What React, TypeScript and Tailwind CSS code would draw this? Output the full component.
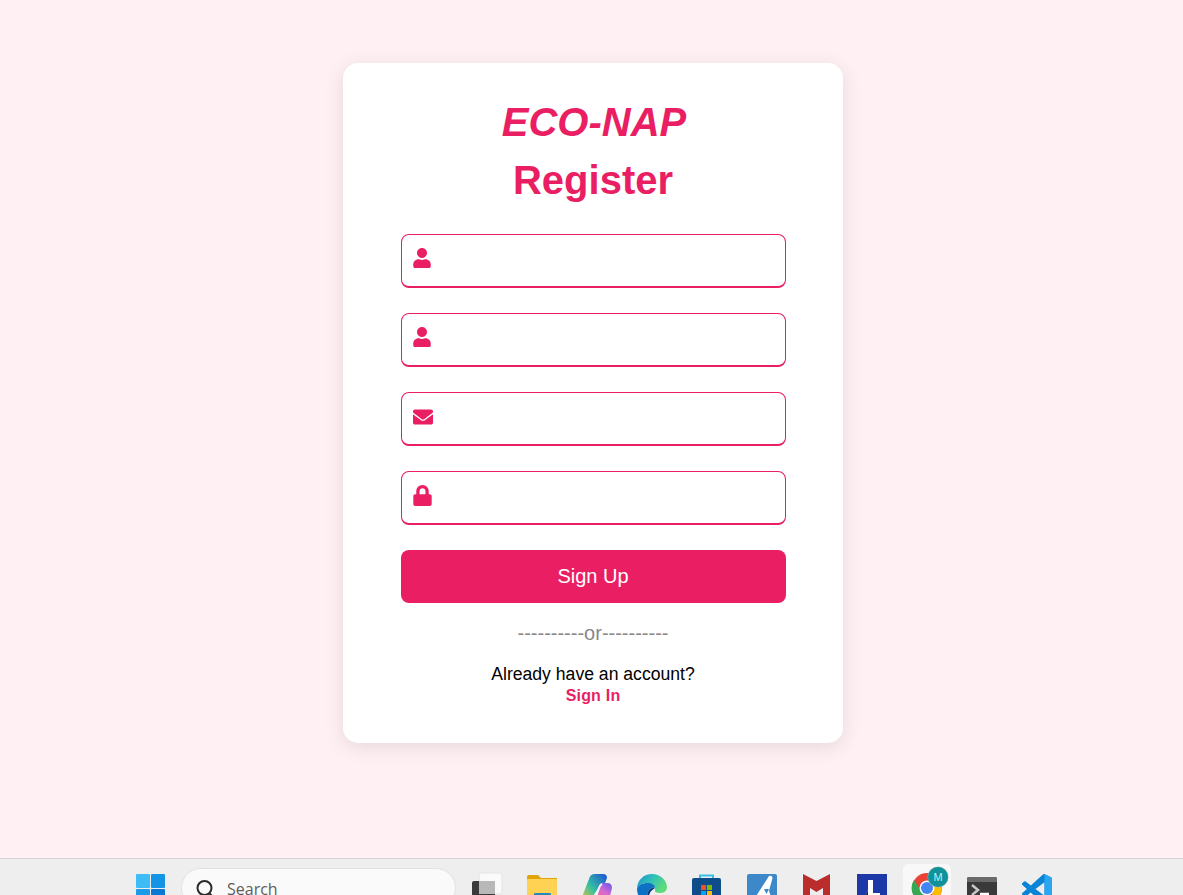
import { FaEnvelope, FaLock, FaUser } from "react-icons/fa";
import type { ReactNode } from "react";

const font = "font-['Liberation_Sans',Arial,sans-serif]";

function Field({ icon }: { icon: ReactNode }) {
  return (
    <div className="flex h-[54px] w-[385px] items-start rounded-[8px] border border-b-2 border-[#e91e63] bg-white pl-[10px] pt-[13px] text-[#e91e63]">
      {icon}
    </div>
  );
}

function Icon({ children }: { children: ReactNode }) {
  return (
    <svg width="30" height="30" viewBox="0 0 30 30" className="overflow-visible">
      {children}
    </svg>
  );
}

function TaskItem({ children, active }: { children: ReactNode; active?: boolean }) {
  return (
    <div className="flex w-[55px] shrink-0 justify-center pt-[5px]">
      <div
        className={
          active
            ? "flex h-[60px] w-[48px] justify-center rounded-[5px] bg-[#f8f8f8] pt-[10px]"
            : "flex h-[60px] w-[48px] justify-center pt-[10px]"
        }
      >
        {children}
      </div>
    </div>
  );
}

export default function App() {
  return (
    <div className={`flex h-[895px] flex-col overflow-hidden bg-[#fff0f3] ${font}`}>
      <main className="flex-1 pl-[343px] pt-[63px]">
        <div className="flex h-[680px] w-[500px] flex-col items-center rounded-[15px] bg-white pt-[36px] shadow-[0_4px_20px_rgba(0,0,0,0.1)]">
          <h1 className="ml-[2px] text-[40px] font-bold italic leading-[46px] text-[#e91e63]">ECO-NAP</h1>
          <h2 className="mt-[12px] text-[40px] font-bold leading-[46px] text-[#e91e63]">Register</h2>

          <form className="mt-[31px] flex flex-col gap-[25px]">
            <Field icon={<FaUser size={20} />} />
            <Field icon={<FaUser size={20} />} />
            <Field icon={<FaEnvelope size={20} className="ml-[1px] mt-[1px]" />} />
            <Field icon={<FaLock size={21} />} />
            <button
              type="button"
              className="h-[53px] w-[385px] rounded-[8px] bg-[#e91e63] pb-[2px] text-[20px] text-white"
            >
              Sign Up
            </button>
          </form>

          <p className="mt-[19px] text-[20px] leading-[23px] text-[#888888]">----------or----------</p>
          <p className="mt-[19px] text-[17.6px] leading-[21px] text-black">Already have an account?</p>
          <a className="mt-[2px] text-[16px] font-bold leading-[18px] tracking-[0.2px] text-[#e91e63]">Sign In</a>
        </div>
      </main>

      <footer className="flex h-[37px] shrink-0 overflow-hidden border-t border-[#d9d2d3] bg-[#eeeeee] pl-[135px]">
        <div className="shrink-0 pt-[15px]">
          <Icon>
            <rect x="1" y="0" width="14" height="14" rx="1" fill="#3dbcf5" />
            <rect x="16" y="0" width="14" height="14" rx="1" fill="#1494e4" />
            <rect x="1" y="15" width="14" height="14" rx="1" fill="#1c9be8" />
            <rect x="16" y="15" width="14" height="14" rx="1" fill="#0a78d4" />
          </Icon>
        </div>

        <div className="ml-[16px] mt-[9px] flex h-[40px] w-[275px] shrink-0 items-start rounded-full border border-[#e2e2e2] bg-[#fafafa] pl-[13px] pt-[10px]">
          <svg width="20" height="20" viewBox="0 0 20 20" fill="none" stroke="#2b2b2b" strokeWidth="2">
            <circle cx="9.5" cy="9" r="7" />
            <path d="M14.5 14.5 18 18" />
          </svg>
          <span className="ml-[12px] font-['Open_Sans',sans-serif] text-[16px] leading-[20px] text-[#5d5d5d]">Search</span>
        </div>

        <div className="ml-[3.5px] flex">
          <TaskItem>
            <Icon>
              <rect x="7" y="-1" width="23" height="21" rx="2" fill="#fafafa" stroke="#e4e4e4" />
              <rect x="0" y="7" width="23" height="24" rx="2" fill="#3a3a3a" />
              <rect x="7" y="7" width="16" height="13" fill="#b8b8b8" />
            </Icon>
          </TaskItem>
          <TaskItem>
            <Icon>
              <path d="M0 3a2 2 0 0 1 2-2h9l3 3h16v26H0z" fill="#e0a30a" />
              <rect x="0" y="5" width="30" height="26" rx="1" fill="#ffd253" />
              <rect x="7" y="19" width="17" height="12" rx="1" fill="#2a86bf" />
            </Icon>
          </TaskItem>
          <TaskItem>
            <Icon>
              <defs>
                <linearGradient id="copA" x1="0" y1="1" x2="1" y2="0">
                  <stop offset="0" stopColor="#f7c52a" />
                  <stop offset="0.45" stopColor="#35c0a0" />
                  <stop offset="1" stopColor="#1c4fd8" />
                </linearGradient>
                <linearGradient id="copB" x1="0.2" y1="1" x2="0.8" y2="0">
                  <stop offset="0" stopColor="#f5606a" />
                  <stop offset="0.6" stopColor="#d86ad0" />
                  <stop offset="1" stopColor="#7a5be8" />
                </linearGradient>
              </defs>
              <path d="M7 5q1-5 6-5h8q4 0 4 4l-2 5h-2q-3 0-4 4L9 25q-1 3-5 3H4q-5 0-4-5z" fill="url(#copA)" />
              <path d="M19 9h6q5 0 5 5l-2 8q-2 8-8 8H9q3 0 4-3l4-14q1-3 2-4z" fill="url(#copB)" />
              <path d="M20 10q-2 1-3 4l-3 9q-1 3-3 5" fill="none" stroke="#f6f2fa" strokeWidth="2" />
            </Icon>
          </TaskItem>
          <TaskItem>
            <Icon>
              <defs>
                <linearGradient id="edgeA" x1="0" y1="0" x2="1" y2="0.5">
                  <stop offset="0" stopColor="#1f8fd0" />
                  <stop offset="0.5" stopColor="#2fc0b8" />
                  <stop offset="1" stopColor="#5fdc78" />
                </linearGradient>
              </defs>
              <path d="M0 15C0 6 7 0 15 0c9 0 15 7 15 13 0 4-3 6-7 6-3 0-5-1-5-2 1-4-2-8-7-8-6 0-10 2-11 6z" fill="url(#edgeA)" />
              <path d="M0 15c1-4 5-6 11-6 4 0 7 2 7 5-4-1-8 2-7 7 1 4 4 7 8 8-1 1-3 1-4 1C6 30 0 23 0 15z" fill="#0d72c4" />
              <path d="M18 14c-4-1-8 2-7 7 0 1 1 2 1 3 0-4 1-7 6-10z" fill="#0a3f80" />
            </Icon>
          </TaskItem>
          <TaskItem>
            <Icon>
              <path d="M8 5V1.500h13V5" fill="none" stroke="#38bfe8" strokeWidth="2" />
              <rect x="0" y="4" width="29" height="26" rx="2" fill="#0f4c8a" />
              <rect x="9" y="11" width="5" height="5" fill="#f25022" />
              <rect x="15" y="11" width="5" height="5" fill="#7fba00" />
              <rect x="9" y="17" width="5" height="5" fill="#00a4ef" />
              <rect x="15" y="17" width="5" height="5" fill="#ffb900" />
            </Icon>
          </TaskItem>
          <TaskItem>
            <Icon>
              <rect x="0" y="0" width="30" height="30" rx="2" fill="#3d88c8" />
              <path d="M22 2c3-1 4 1 3 4l-2 7-1 4 3 8v5h-8l-2-8-2 3-4 5H4z" fill="#ffffff" />
              <path d="M17 15h5l-2.500 5z" fill="#3d88c8" />
            </Icon>
          </TaskItem>
          <TaskItem>
            <Icon>
              <path d="M1 0l13.500 7L28 0v24l-7 3V14l-6.500 4L8 14v13l-7-3z" fill="#bb2d2d" />
            </Icon>
          </TaskItem>
          <TaskItem>
            <Icon>
              <rect x="0" y="0" width="30" height="30" fill="#1d39a8" />
              <path d="M11 6h5v13h7v11H5l6-14z" fill="#ffffff" />
              <path d="M11 16v10l-2 4H5z" fill="#10245f" />
            </Icon>
          </TaskItem>
          <TaskItem active>
            <Icon>
              <circle cx="15" cy="14" r="15" fill="#ea4335" />
              <path d="M2 6a15 15 0 0 0 13 23l3-9h-7z" fill="#34a853" />
              <path d="M15 9h14a15 15 0 0 1-14 20l7-12z" fill="#fbbc04" />
              <circle cx="15" cy="14" r="7.500" fill="#ffffff" />
              <circle cx="15" cy="14" r="6" fill="#4285f4" />
              <circle cx="26" cy="3" r="10.500" fill="#a8b8b8" />
              <circle cx="26" cy="3" r="10" fill="#0f929b" />
              <text x="26" y="7" textAnchor="middle" fontSize="11" fill="#bdeff0" fontFamily="Liberation Sans, sans-serif">
                M
              </text>
            </Icon>
          </TaskItem>
          <TaskItem>
            <Icon>
              <rect x="0" y="3" width="30" height="28" rx="2" fill="#3a3a3a" />
              <path d="M0 5a2 2 0 0 1 2-2h26a2 2 0 0 1 2 2v3H0z" fill="#6a6a6a" />
              <path d="M5 11l6 5-6 5" fill="none" stroke="#c8c8c8" strokeWidth="2.500" />
              <path d="M13 20h9" stroke="#ffffff" strokeWidth="2.500" />
            </Icon>
          </TaskItem>
          <TaskItem>
            <svg width="30" height="30" viewBox="0 0 100 100">
              <path
                fillRule="evenodd"
                d="M70.900 99.300a6.200 6.200 0 0 0 5-.2l20.600-9.900a6.200 6.200 0 0 0 3.500-5.600V16.400a6.200 6.200 0 0 0-3.500-5.600L75.900.9a6.200 6.200 0 0 0-7.100 1.200L29.400 38 12.200 25a4.200 4.200 0 0 0-5.300.2l-5.500 5a4.200 4.200 0 0 0 0 6.200L16.300 50 1.400 63.600a4.200 4.200 0 0 0 0 6.200l5.500 5a4.200 4.200 0 0 0 5.300.2l17.200-13 39.400 35.900a6.200 6.200 0 0 0 2.100 1.400zM75 27.300 45.100 50 75 72.700z"
                fill="#0a84d6"
              />
              <path
                d="M75 0.300a6.200 6.200 0 0 1 .9.600l20.600 9.900a6.200 6.200 0 0 1 3.500 5.600v67.200a6.200 6.200 0 0 1-3.500 5.600l-20.600 9.900a6.200 6.200 0 0 1-5 .2l4.100-27.600V27.300z"
                fill="#2aa5ef"
              />
            </svg>
          </TaskItem>
        </div>
      </footer>
    </div>
  );
}
